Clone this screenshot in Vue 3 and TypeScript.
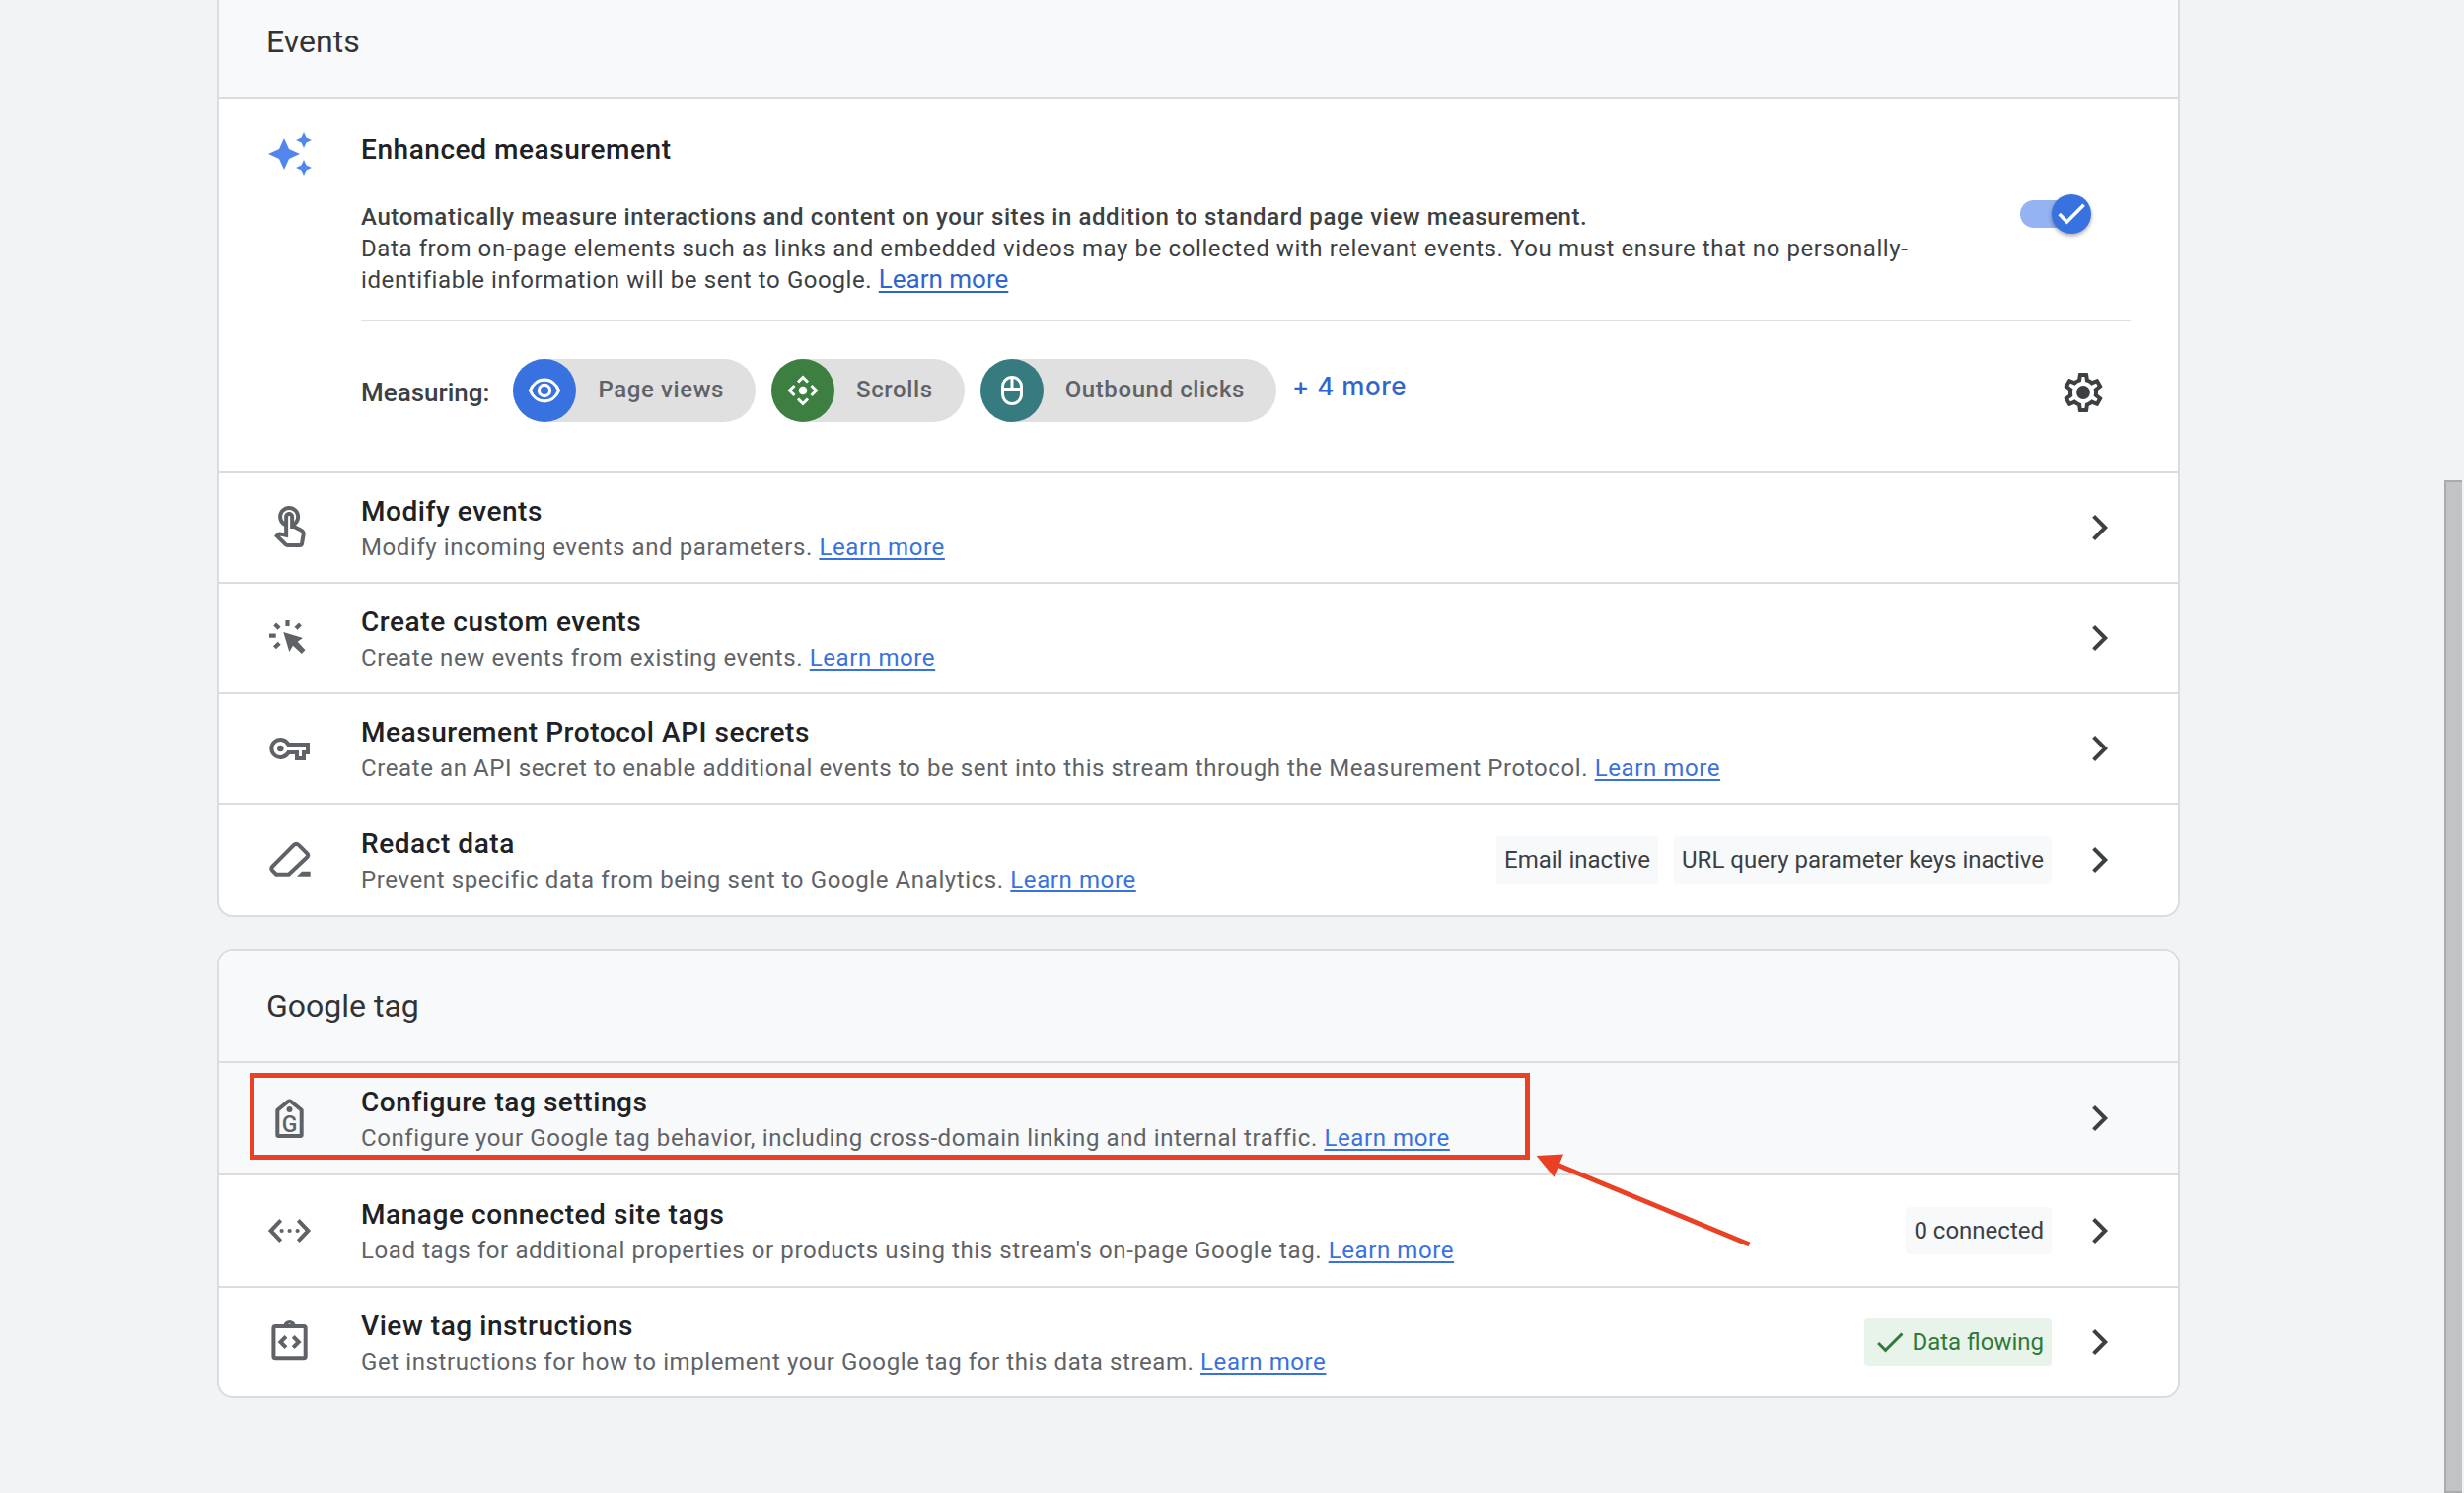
<script setup lang="ts">
import { ref } from 'vue'

interface Badge {
  text: string
  ok?: boolean
}

interface SettingRow {
  icon: string
  title: string
  text: string
  badges?: Badge[]
  highlighted?: boolean
}

interface Chip {
  label: string
  tone: string
  icon: string
}

// Icon markup, drawn on a 48 x 48 grid
const icons: Record<string, string> = {
  touch:
    '<path transform="scale(2)" fill="currentColor" d="M18.19,12.44l-3.24-1.62c1.29-1,2.12-2.56,2.12-4.32c0-3.03-2.47-5.5-5.5-5.5s-5.5,2.47-5.5,5.5c0,2.13,1.22,3.98,3,4.89v3.26c-2.15-0.46-2.02-0.44-2.26-0.44c-0.53,0-1.03,0.21-1.41,0.59L4,16.22l5.09,5.09C9.52,21.75,10.12,22,10.74,22h6.3c0.98,0,1.81-0.7,1.97-1.67l0.8-4.71C20.03,14.32,19.38,13.04,18.19,12.44z M17.84,15.29L17.04,20h-6.3c-0.09,0-0.17-0.04-0.24-0.1l-3.68-3.68l4.25,0.89V6.5c0-0.28,0.22-0.5,0.5-0.5c0.28,0,0.5,0.22,0.5,0.5v6h1.76l3.46,1.73C17.69,14.43,17.91,14.86,17.84,15.29z M8.07,6.5c0-1.93,1.57-3.5,3.5-3.5s3.5,1.57,3.5,3.5c0,0.95-0.38,1.81-1,2.44V6.5c0-1.38-1.12-2.5-2.5-2.5c-1.38,0-2.5,1.12-2.5,2.5v2.44C8.45,8.31,8.07,7.45,8.07,6.5z"/>',
  click:
    '<path d="M21.5 6v6M3 21.7h6.7M8.7 10l4.4 4.3M34.4 10l-4.4 4.3M8.4 33.8l4.8-4.6" fill="none" stroke="currentColor" stroke-width="4.2"/><path d="M17.3 18 37 24l-5.3 3.7 7.8 8.6-3.7 3.8-8.8-8.4-3.7 6.3z" fill="currentColor"/>',
  key: '<path d="M22.4 20H42v8h-4v6h-7v-6h-8.6a9 9 0 1 1 0-8z" fill="none" stroke="currentColor" stroke-width="4"/><circle cx="14.3" cy="24" r="3.3" fill="currentColor"/>',
  eraser:
    '<path d="M27.9 8.9 6.3 30.6q-2 2.2 0 4.3l3.8 3.8h12.6l18.6-17.4q1.9-2 0-3.9l-8.6-8.5q-2.4-2.2-4.8 0z" fill="none" stroke="currentColor" stroke-width="4"/><path d="M31 40.7l5-5h8.7v5z" fill="currentColor"/>',
  tag: '<path d="M11.3 15.8 22 7q1.5-1.1 3 0l10.7 8.8v25q0 1.2-1.2 1.2h-22q-1.2 0-1.2-1.2z" fill="none" stroke="currentColor" stroke-width="4" stroke-linejoin="round"/><circle cx="23.5" cy="15" r="3" fill="currentColor"/><text x="23.5" y="38" text-anchor="middle" font-family="Roboto, sans-serif" font-size="23" font-weight="500" fill="currentColor">G</text>',
  connect:
    '<path d="M14.7 13.4 4.6 24l10.1 10.6M32.3 13.4 42.4 24 32.3 34.6" fill="none" stroke="currentColor" stroke-width="4"/><g fill="currentColor"><circle cx="15.6" cy="24" r="2.1"/><circle cx="23.6" cy="24" r="2.1"/><circle cx="31.6" cy="24" r="2.1"/></g>',
  clipboard:
    '<rect x="7.4" y="8" width="32.3" height="32.2" rx="1.8" fill="none" stroke="currentColor" stroke-width="4"/><path fill-rule="evenodd" d="M17.6 7.5a6 5.6 0 0 1 12 0zM23.6 5.2a1.7 1.7 0 1 0 0 3.4 1.7 1.7 0 0 0 0-3.4z" fill="currentColor"/><path d="M20 18.3 14.4 24l5.6 5.7M27.2 18.3l5.6 5.7-5.6 5.7" fill="none" stroke="currentColor" stroke-width="4"/>',
  eye: '<path d="M9.500 24C12 17.500 17.500 13.200 24 13.200S36 17.500 38.500 24C36 30.500 30.500 34.800 24 34.800S12 30.500 9.500 24z" fill="none" stroke="currentColor" stroke-width="3.200"/><circle cx="24" cy="24" r="5.600" fill="none" stroke="currentColor" stroke-width="3.200"/>',
  scroll:
    '<circle cx="24" cy="24" r="4.300" fill="currentColor"/><path d="M19 15.500l5-5 5 5M19 32.500l5 5 5-5M15.500 19l-5 5 5 5M32.500 19l5 5-5 5" fill="none" stroke="currentColor" stroke-width="3"/>',
  mouse:
    '<rect x="14.500" y="10.500" width="19" height="27" rx="9.500" fill="none" stroke="currentColor" stroke-width="3"/><path d="M14.500 22.500h19M24 10.500v12" fill="none" stroke="currentColor" stroke-width="3"/>',
}

const chips: Chip[] = [
  { label: 'Page views', tone: 'blue', icon: 'eye' },
  { label: 'Scrolls', tone: 'green', icon: 'scroll' },
  { label: 'Outbound clicks', tone: 'teal', icon: 'mouse' },
]

const eventRows: SettingRow[] = [
  { icon: 'touch', title: 'Modify events', text: 'Modify incoming events and parameters.' },
  { icon: 'click', title: 'Create custom events', text: 'Create new events from existing events.' },
  {
    icon: 'key',
    title: 'Measurement Protocol API secrets',
    text: 'Create an API secret to enable additional events to be sent into this stream through the Measurement Protocol.',
  },
  {
    icon: 'eraser',
    title: 'Redact data',
    text: 'Prevent specific data from being sent to Google Analytics.',
    badges: [{ text: 'Email inactive' }, { text: 'URL query parameter keys inactive' }],
  },
]

const tagRows: SettingRow[] = [
  {
    icon: 'tag',
    title: 'Configure tag settings',
    text: 'Configure your Google tag behavior, including cross-domain linking and internal traffic.',
    highlighted: true,
  },
  {
    icon: 'connect',
    title: 'Manage connected site tags',
    text: "Load tags for additional properties or products using this stream's on-page Google tag.",
    badges: [{ text: '0 connected' }],
  },
  {
    icon: 'clipboard',
    title: 'View tag instructions',
    text: 'Get instructions for how to implement your Google tag for this data stream.',
    badges: [{ text: 'Data flowing', ok: true }],
  },
]

const sections = [
  { key: 'events', title: 'Events', rows: eventRows },
  { key: 'tag', title: 'Google tag', rows: tagRows },
]

const enhanced = ref(true)
</script>

<template>
  <div class="page">
    <main class="content">
      <section v-for="section in sections" :key="section.key" class="card" :class="`card--${section.key}`">
        <header class="card-header">
          <h2>{{ section.title }}</h2>
        </header>

        <div v-if="section.key === 'events'" class="enhanced">
          <svg class="icon sparkle" viewBox="0 0 24 24" aria-hidden="true">
            <path
              fill="currentColor"
              d="M19 9l1.250-2.750L23 5l-2.750-1.250L19 1l-1.250 2.750L15 5l2.750 1.250L19 9zM11.500 9.500L9 4 6.500 9.500 1 12l5.500 2.500L9 20l2.500-5.500L17 12l-5.500-2.500zM19 15l-1.250 2.750L15 19l2.750 1.250L19 23l1.250-2.750L23 19l-2.750-1.250L19 15z"
            />
          </svg>
          <div class="enhanced-body">
            <h3 id="enhanced-title">Enhanced measurement</h3>
            <div class="enhanced-info">
              <p>
                <strong>Automatically measure interactions and content on your sites in addition to standard page view measurement.</strong><br />
                Data from on-page elements such as links and embedded videos may be collected with relevant events. You must ensure that no personally-identifiable information will be sent to Google.
                <a class="info-link" href="#">Learn more</a>
              </p>
              <label class="switch">
                <input v-model="enhanced" type="checkbox" role="switch" aria-labelledby="enhanced-title" />
                <svg class="thumb" viewBox="0 0 40 40" aria-hidden="true">
                  <path d="M7.700 20l7.700 8L32.600 10.800" fill="none" stroke="#fff" stroke-width="3.600" />
                </svg>
              </label>
            </div>
            <div class="measuring">
              <span class="measuring-label">Measuring:</span>
              <ul class="chips">
                <li v-for="chip in chips" :key="chip.label" class="chip">
                  <span class="chip-icon" :class="`chip-icon--${chip.tone}`">
                    <svg class="icon" viewBox="0 0 48 48" aria-hidden="true" v-html="icons[chip.icon]" />
                  </span>
                  <span class="chip-label">{{ chip.label }}</span>
                </li>
              </ul>
              <button type="button" class="more">+ 4 more</button>
              <button type="button" class="icon-button gear" aria-label="Measurement settings">
                <svg class="icon" viewBox="0 0 24 24" aria-hidden="true">
                  <path
                    fill="currentColor"
                    d="M19.430 12.980c.04-.32.07-.64.07-.98 0-.34-.03-.66-.07-.98l2.110-1.650c.19-.15.24-.42.12-.64l-2-3.460c-.09-.16-.26-.25-.44-.25-.06 0-.12.01-.17.03l-2.490 1c-.52-.4-1.080-.73-1.690-.98l-.38-2.650C14.460 2.180 14.250 2 14 2h-4c-.25 0-.46.18-.49.42l-.38 2.650c-.61.25-1.170.59-1.690.98l-2.490-1c-.06-.02-.12-.03-.18-.03-.17 0-.34.09-.43.25l-2 3.460c-.13.22-.07.49.12.64l2.110 1.650c-.04.32-.07.65-.07.98 0 .33.03.66.07.98l-2.110 1.650c-.19.15-.24.42-.12.64l2 3.460c.09.16.26.25.44.25.06 0 .12-.01.17-.03l2.490-1c.52.4 1.080.73 1.690.98l.38 2.650c.03.24.24.42.49.42h4c.25 0 .46-.18.49-.42l.38-2.650c.61-.25 1.170-.59 1.690-.98l2.490 1c.06.02.12.03.18.03.17 0 .34-.09.43-.25l2-3.460c.12-.22.07-.49-.12-.64l-2.110-1.650zm-1.980-1.710c.04.31.05.52.05.73 0 .21-.02.43-.05.73l-.14 1.130.89.7 1.080.84-.7 1.210-1.270-.51-1.040-.42-.9.68c-.43.32-.84.56-1.250.73l-1.060.43-.16 1.130-.2 1.350h-1.400l-.19-1.350-.16-1.130-1.060-.43c-.43-.18-.83-.41-1.230-.71l-.91-.7-1.060.43-1.270.51-.7-1.210 1.080-.84.89-.7-.14-1.130c-.03-.31-.05-.54-.05-.74s.02-.43.05-.73l.14-1.130-.89-.7-1.080-.84.7-1.210 1.270.51 1.040.42.9-.68c.43-.32.84-.56 1.250-.73l1.060-.43.16-1.130.2-1.350h1.390l.19 1.350.16 1.130 1.060.43c.43.18.83.41 1.230.71l.91.7 1.060-.43 1.270-.51.7 1.210-1.070.85-.89.7.14 1.130z"
                  />
                  <circle cx="12" cy="12" r="3.450" fill="currentColor" />
                </svg>
              </button>
            </div>
          </div>
        </div>

        <div v-for="row in section.rows" :key="row.title" class="row" :class="{ 'row--active': row.highlighted }">
          <svg class="icon" viewBox="0 0 48 48" aria-hidden="true" v-html="icons[row.icon]" />
          <div class="row-body">
            <h3>{{ row.title }}</h3>
            <p>{{ row.text }} <a href="#">Learn more</a></p>
          </div>
          <span v-for="badge in row.badges" :key="badge.text" class="badge" :class="{ 'badge--ok': badge.ok }">
            <svg v-if="badge.ok" class="badge-check" viewBox="0 0 24 24" aria-hidden="true">
              <path fill="currentColor" d="M9 16.170L4.830 12l-1.420 1.410L9 19 21 7l-1.410-1.410z" />
            </svg>
            {{ badge.text }}
          </span>
          <button type="button" class="icon-button chevron" :aria-label="`Open ${row.title}`">
            <svg class="icon" viewBox="0 0 48 48" aria-hidden="true">
              <path d="M18.600 12.400L30.200 24 18.600 35.600" fill="none" stroke="currentColor" stroke-width="4" />
            </svg>
          </button>

          <template v-if="row.highlighted">
            <div class="callout" aria-hidden="true"></div>
            <svg class="callout-arrow" viewBox="0 0 220 98" aria-hidden="true">
              <path d="M1.600 4 29 2.500 19.500 25.700z" fill="#ea4125" />
              <path d="M20 12 217.500 94" stroke="#ea4125" stroke-width="5" />
            </svg>
          </template>
        </div>
      </section>
    </main>
    <div class="scrollbar" aria-hidden="true"></div>
  </div>
</template>

<style>
body {
  margin: 0;
  overflow: hidden;
  background: #f1f3f5;
}
</style>

<style scoped>
.page {
  height: 100vh;
  overflow: hidden;
  background: #f1f3f5;
  color: #3c4043;
  font-family: Roboto, 'Liberation Sans', sans-serif;
  font-size: 24px;
  line-height: 32px;
}

.content {
  display: flex;
  flex-direction: column;
  gap: 32px;
  margin-top: -16px;
  padding: 0 288px 0 220px;
}

h2,
h3,
p,
ul {
  margin: 0;
  padding: 0;
}

button {
  padding: 0;
  border: 0;
  background: none;
  color: inherit;
  cursor: pointer;
}

.icon {
  display: block;
  flex: none;
  width: 48px;
  height: 48px;
}

.card {
  border: 2px solid #dadce0;
  border-radius: 16px;
  background: #fff;
}

.card-header {
  display: flex;
  align-items: center;
  height: 112px;
  padding: 0 48px;
  border-bottom: 2px solid #dadce0;
  border-radius: 14px 14px 0 0;
  background: #f8f9fb;
}

h2 {
  color: #333;
  font-size: 32px;
  font-weight: 400;
  line-height: 40px;
}

h3 {
  color: #202124;
  font-size: 28px;
  font-weight: 500;
  line-height: 36px;
  letter-spacing: 0.02em;
}

/* Enhanced measurement */
.enhanced {
  display: flex;
  gap: 48px;
  padding: 32px 48px 50px;
  border-bottom: 2px solid #dadce0;
}

.sparkle {
  color: #5286ee;
}

.enhanced-body {
  flex: 1;
}

.enhanced-body h3 {
  line-height: 40px;
}

.enhanced-info {
  display: flex;
  justify-content: space-between;
  margin-top: 24px;
  padding-bottom: 24px;
  border-bottom: 2px solid #e0e0e0;
}

.enhanced-info p {
  max-width: 1600px;
  padding-top: 8px;
  letter-spacing: 0.025em;
}

.enhanced-info strong,
.measuring-label {
  font-weight: 500;
}

a {
  color: #3871e0;
  text-decoration: underline;
  text-decoration-thickness: 2px;
  text-underline-offset: 3px;
}

.info-link {
  color: #3065d0;
  font-size: 26px;
  letter-spacing: normal;
  line-height: 30px;
}

.switch {
  position: relative;
  flex: none;
  width: 72px;
  height: 40px;
  margin-right: 40px;
}

.switch input {
  display: block;
  width: 64px;
  height: 28px;
  margin: 7px 0 0;
  border-radius: 14px;
  appearance: none;
  background: #95b3f2;
  cursor: pointer;
}

.thumb {
  position: absolute;
  top: 1px;
  right: 0;
  width: 40px;
  height: 40px;
  border-radius: 50%;
  background: #3871e0;
  box-shadow: 0 2px 4px rgba(0, 0, 0, 0.35);
  pointer-events: none;
}

.measuring {
  display: flex;
  align-items: center;
  padding-top: 38px;
}

.measuring-label {
  padding-top: 4px;
  font-size: 26px;
}

.chips {
  display: flex;
  gap: 16px;
  margin-left: 24px;
  list-style: none;
}

.chip {
  display: flex;
  align-items: center;
  padding-right: 32px;
  border-radius: 32px;
  background: #e0e0e0;
}

.chip-icon {
  padding: 8px;
  border-radius: 50%;
  color: #fff;
}

.chip-icon--blue {
  background: #3871e0;
}

.chip-icon--green {
  background: #3c7f40;
}

.chip-icon--teal {
  background: #357b80;
}

.chip-label {
  padding: 0 0 2px 22px;
  color: #5f6368;
  font-weight: 500;
  letter-spacing: 0.025em;
}

.more {
  margin-left: 16px;
  padding-bottom: 8px;
  color: #3065d0;
  font: 500 26px/32px Inter, sans-serif;
  letter-spacing: 0.02em;
}

.icon-button {
  flex: none;
  width: 48px;
  height: 48px;
  color: #3c4043;
}

.gear {
  margin: 4px 24px 0 auto;
}

/* Setting rows */
.row {
  position: relative;
  display: flex;
  align-items: center;
  min-height: 110px;
  padding: 0 56px 0 48px;
  border-bottom: 2px solid #dadce0;
  color: #5f6368;
}

.card--tag .row {
  min-height: 112px;
}

.row:last-child,
.card--tag .row:last-child {
  border-bottom: 0;
  border-radius: 0 0 14px 14px;
}

.card--events .row:last-child {
  min-height: 112px;
}

.card--tag .row:last-child {
  min-height: 110px;
}

.row--active {
  background: #f8f9fb;
}

.row-body {
  flex: 1;
  padding-top: 4px;
  margin-left: 48px;
}

.row-body p {
  line-height: 36px;
  letter-spacing: 0.025em;
}

.badge {
  display: flex;
  align-items: center;
  gap: 4px;
  height: 48px;
  margin-left: 16px;
  padding: 0 8px;
  border-radius: 4px;
  background: #f8f9fb;
  color: #3c4043;
}

.badge--ok {
  background: #e8f3e9;
  color: #2f7a3a;
}

.badge-check {
  width: 36px;
  height: 36px;
}

.chevron {
  margin-left: 24px;
}

/* Red annotation over the highlighted row */
.callout {
  position: absolute;
  top: 10px;
  left: 31px;
  box-sizing: border-box;
  width: 1298px;
  height: 88px;
  border: 5px solid #ea4125;
  pointer-events: none;
}

.callout-arrow {
  position: absolute;
  z-index: 1;
  top: 90px;
  left: 1334px;
  width: 220px;
  height: 98px;
  pointer-events: none;
}

.scrollbar {
  position: fixed;
  top: 487px;
  right: 2px;
  bottom: 0;
  box-sizing: border-box;
  width: 18px;
  border: 2px solid #a9abad;
  border-right: 0;
  background: #c1c3c5;
}
</style>
